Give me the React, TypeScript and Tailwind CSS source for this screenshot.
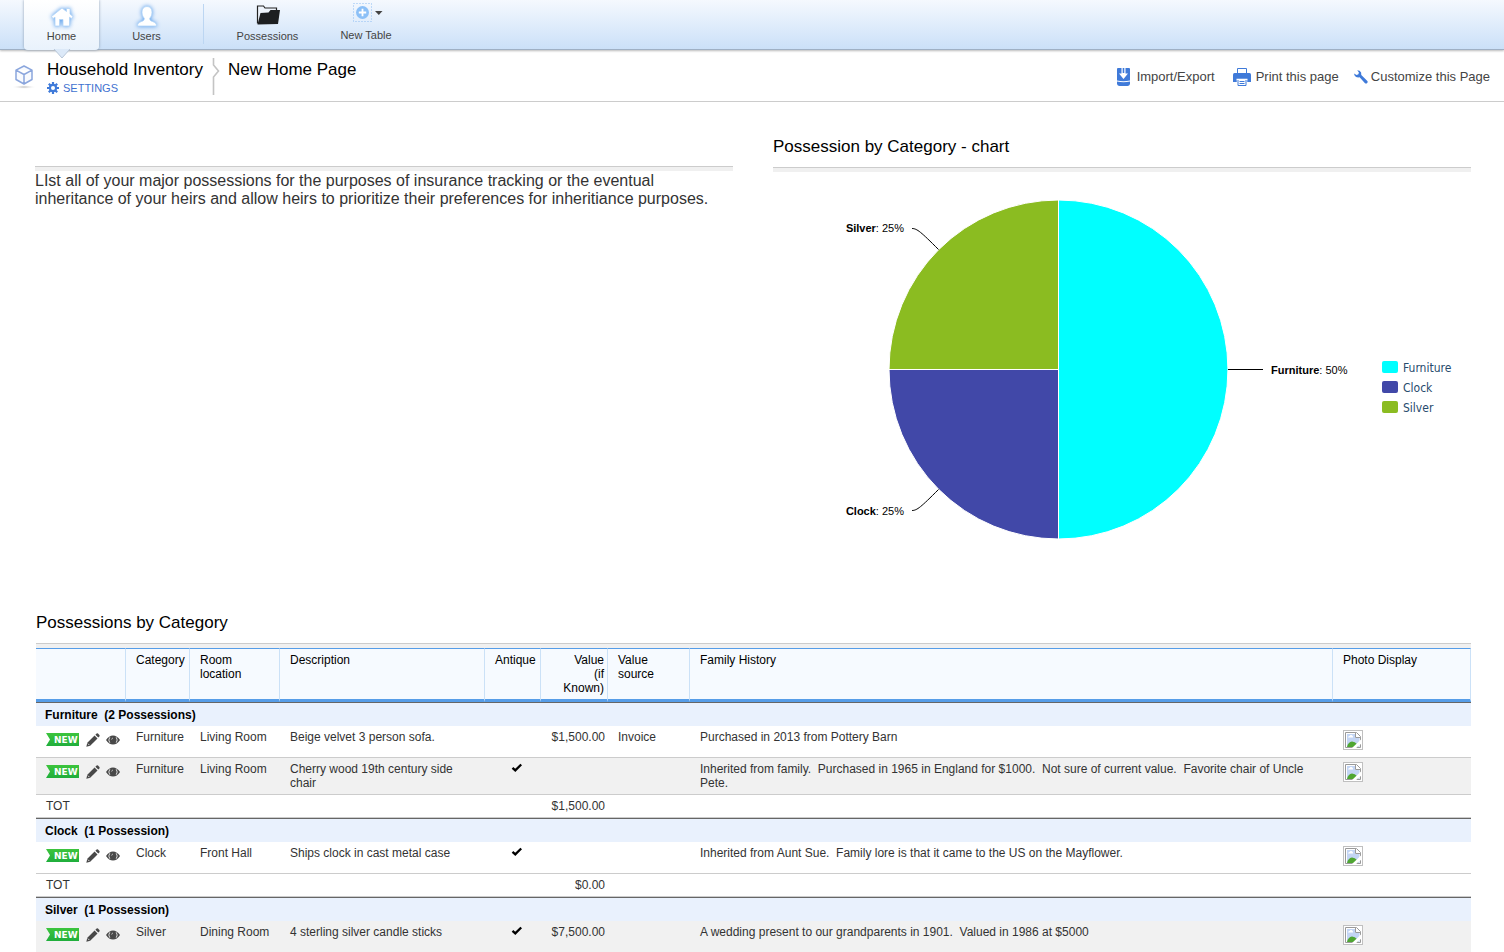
import React from "react";

interface Possession {
  category: string;
  room: string;
  description: string;
  antique?: boolean;
  value?: string;
  source?: string;
  history: string;
  shaded?: boolean;
}

interface Group {
  title: string;
  total?: string;
  rows: Possession[];
}

const groups: Group[] = [
  {
    title: "Furniture\u00a0 (2 Possessions)",
    total: "$1,500.00",
    rows: [
      {
        category: "Furniture",
        room: "Living Room",
        description: "Beige velvet 3 person sofa.",
        value: "$1,500.00",
        source: "Invoice",
        history: "Purchased in 2013 from Pottery Barn",
      },
      {
        category: "Furniture",
        room: "Living Room",
        description: "Cherry wood 19th century side chair",
        antique: true,
        history:
          "Inherited from family.\u00a0 Purchased in 1965 in England for $1000.\u00a0 Not sure of current value.\u00a0 Favorite chair of Uncle Pete.",
        shaded: true,
      },
    ],
  },
  {
    title: "Clock\u00a0 (1 Possession)",
    total: "$0.00",
    rows: [
      {
        category: "Clock",
        room: "Front Hall",
        description: "Ships clock in cast metal case",
        antique: true,
        history:
          "Inherited from Aunt Sue.\u00a0 Family lore is that it came to the US on the Mayflower.",
      },
    ],
  },
  {
    title: "Silver\u00a0 (1 Possession)",
    rows: [
      {
        category: "Silver",
        room: "Dining Room",
        description: "4 sterling silver candle sticks",
        antique: true,
        value: "$7,500.00",
        history:
          "A wedding present to our grandparents in 1901.\u00a0 Valued in 1986 at $5000",
        shaded: true,
      },
    ],
  },
];

function HomeIcon() {
  return (
    <svg width="26" height="24" viewBox="0 0 26 24" aria-hidden className="drop-shadow-[0_0_2px_#4f98ea]">
      <path
        d="M13 3 L2.500 11.500 L4 13.500 L6 12.200 V21 H10.500 V14.500 H14 V21 H20.500 V12.200 L22.500 13.500 L24 11.500 L21 9 V3.500 H17.500 V6.500 Z"
        fill="#fff"
        stroke="#b4d5f8"
        strokeWidth="0.8"
      />
    </svg>
  );
}

function UserIcon() {
  return (
    <svg width="26" height="24" viewBox="0 0 26 24" aria-hidden className="drop-shadow-[0_0_2px_#4f98ea]">
      <path
        d="M13 1.5 C9.7 1.5 8 3.8 8 7.2 C8 10 9 12 10.3 13.2 C10.3 15.2 9.6 15.8 7.5 16.5 C4.7 17.5 3.5 18.6 3.5 21 H22.5 C22.5 18.6 21.3 17.5 18.5 16.5 C16.4 15.8 15.7 15.2 15.7 13.2 C17 12 18 10 18 7.2 C18 3.8 16.3 1.5 13 1.5 Z"
        fill="#fff"
        stroke="#b4d5f8"
        strokeWidth="0.8"
      />
    </svg>
  );
}

function FolderIcon() {
  return (
    <svg width="24" height="20" viewBox="0 0 24 20" aria-hidden>
      <path d="M1.500 18.500 V1 H7.500 L9 3 H20.500 V5" fill="#eef4fc" stroke="#222" strokeWidth="1.2" />
      <path d="M1.500 19.500 L4.500 8 L12.500 7.500 L14.500 5 H24 L22 19 Z" fill="#1d1f21" />
    </svg>
  );
}

function NewTableIcon() {
  return (
    <svg width="30" height="19" viewBox="0 0 30 19" aria-hidden>
      <rect x="0.5" y="0.5" width="18" height="18" fill="none" stroke="#8dbdf2" strokeDasharray="1 2" />
      <circle cx="9.5" cy="9.5" r="6.5" fill="#8cc0f7" />
      <path d="M9.5 5.8 V13.2 M5.8 9.5 H13.2" stroke="#fff" strokeWidth="1.8" />
      <path d="M22 8 H29.5 L25.8 12 Z" fill="#444" />
    </svg>
  );
}

function CubeIcon() {
  return (
    <svg width="26" height="26" viewBox="0 0 26 26" aria-hidden>
      <defs>
        <radialGradient id="cube-shadow">
          <stop offset="0" stopColor="#bbb" />
          <stop offset="1" stopColor="#fff" stopOpacity="0" />
        </radialGradient>
      </defs>
      <ellipse cx="13" cy="23" rx="12.5" ry="2" fill="url(#cube-shadow)" />
      <path
        d="M13 2 L21 6.2 V15.5 L13 20 L5 15.5 V6.2 Z M5 6.2 L13 10.5 L21 6.2 M13 10.5 V20"
        fill="#f8fafe"
        stroke="#8ba6dd"
        strokeWidth="1.5"
        strokeLinejoin="round"
      />
    </svg>
  );
}

function GearIcon() {
  return (
    <svg width="12" height="12" viewBox="0 0 12 12" aria-hidden>
      <g stroke="#3f7ad9" strokeWidth="2.2">
        <path d="M6 0 V12 M0 6 H12 M1.8 1.8 L10.2 10.2 M10.2 1.8 L1.8 10.2" />
      </g>
      <circle cx="6" cy="6" r="4.2" fill="#3f7ad9" />
      <circle cx="6" cy="6" r="2" fill="#fff" />
    </svg>
  );
}

function ImportIcon() {
  return (
    <svg width="13" height="18" viewBox="0 0 13 18" aria-hidden>
      <path d="M0 1 Q0 0 1 0 H12 Q13 0 13 1 V12.500 Q6.500 14 0 12.500 Z" fill="#3f7ad9" />
      <path d="M4.500 0 H5.700 V5 H7.300 V0 H8.500 V5.500 H11 L6.500 11 L2 5.500 H4.500 Z" fill="#fff" />
      <path d="M0 13.500 Q6.500 15 13 13.500 V16 Q12.500 18 10.500 18 H2.500 Q0.500 18 0 16 Z" fill="#3f7ad9" />
    </svg>
  );
}

function PrintIcon() {
  return (
    <svg width="18" height="18" viewBox="0 0 18 18" aria-hidden>
      <path d="M4.5 6 V0.5 H13.5 V6" fill="#fff" stroke="#3f7ad9" />
      <path d="M1.5 5 H16.5 Q18 5 18 6.5 V14 H0 V6.5 Q0 5 1.5 5 Z" fill="#3f7ad9" />
      <path d="M3.5 11.5 H14.500 M4.500 11.500 H13.500 V17.500 H4.500 Z" fill="#fff" stroke="#fff" strokeWidth="1.5" />
      <path d="M5 12 V17.5 H13 V12" fill="none" stroke="#3f7ad9" />
      <path d="M6.500 13.500 H11.500 M6.500 15.500 H11.500" stroke="#3f7ad9" />
    </svg>
  );
}

function WrenchIcon() {
  return (
    <svg width="14" height="14" viewBox="0 0 14 14" aria-hidden>
      <path
        d="M3.2 0.3 L5.6 0.8 Q7.8 2 7.3 5 L13.6 11.2 Q14 12.4 13 13.2 Q12 14 11 13.2 L5.6 7.3 Q2 8 0.6 5.6 L0 3.6 L2.6 4.9 L4.4 4.2 L4.9 2.4 Z"
        fill="#3f7ad9"
      />
    </svg>
  );
}

function PencilIcon() {
  return (
    <svg width="14" height="14" viewBox="0 0 14 14" aria-hidden>
      <path d="M0.3 13.7 L1.3 9.8 L8.6 2.5 L11.5 5.4 L4.2 12.7 Z" fill="#484848" />
      <path d="M9.4 1.7 L10.6 0.6 Q11.3 0 12 0.6 L13.4 2 Q14 2.7 13.4 3.4 L12.3 4.6 Z" fill="#484848" />
      <path d="M1.9 10.6 L3.4 12.1" stroke="#fff" strokeWidth="0.8" />
    </svg>
  );
}

function EyeIcon() {
  return (
    <svg width="14" height="10" viewBox="0 0 14 10" aria-hidden>
      <path d="M0 5 Q3 0.5 7 0.5 Q11 0.5 14 5 Q11 9.5 7 9.5 Q3 9.5 0 5 Z" fill="#484848" />
      <path d="M3.8 2.3 Q1.8 5 3.8 7.7 M10.2 2.3 Q12.2 5 10.2 7.7" fill="none" stroke="#eee" strokeWidth="0.9" />
      <path d="M5.6 4.6 Q5.700 3.200 7 3" fill="none" stroke="#ccc" strokeWidth="0.8" />
    </svg>
  );
}

function CheckIcon() {
  return (
    <svg width="12" height="10" viewBox="0 0 12 10" role="img" aria-label="Yes">
      <path d="M1.5 4.8 L4.3 7.4 L10.2 1.5" fill="none" stroke="#000" strokeWidth="2.3" />
    </svg>
  );
}

function PhotoIcon() {
  return (
    <svg width="20" height="20" viewBox="0 0 20 20" role="img" aria-label="Photo" className="block">
      <rect x="0.5" y="0.5" width="19" height="19" fill="#fff" stroke="#c0c0c0" />
      <path d="M2.5 2.5 H13.5 L17.5 6.5 V17.5 H2.5 Z" fill="#fff" stroke="#9a9a9a" />
      <path d="M4 4 H12 V8 H16.5 V17 H4 Z" fill="#c3d5f4" />
      <path d="M5 7.500 Q5 6 6.5 6 Q7 4.500 8.500 5 Q10.5 5.500 10 7.500 Z" fill="#fff" />
      <path d="M4 17 Q5 12 9 11.500 Q12 11.500 14 14 L15 17 Z" fill="#4fa632" />
      <path d="M18.500 9 L8.500 18.500 H12.500 L18.500 13.500 Z" fill="#fff" />
      <path d="M12.5 2.5 V7.5 H17.5" fill="#fff" stroke="#9a9a9a" />
    </svg>
  );
}

function TopNav() {
  return (
    <nav className="flex h-[50px] border-b border-[#9fb0c4] bg-linear-to-b from-[#f5f9fe] to-[#cbe0f8] pl-6 text-[11px] leading-[14px] text-[#444] shadow-[0_1px_2px_#bbb]">
      <a
        href="#home"
        className="relative flex h-[50px] w-[75px] flex-col items-center rounded-b bg-linear-to-b from-white to-[#e9f2fc] pt-[5px] shadow-[0_0_3px_#8a9bb0]"
      >
        <HomeIcon />
        Home
        <svg width="18" height="10" viewBox="0 0 18 10" aria-hidden className="absolute top-[49px] left-[29px]">
          <path d="M1 0 L9 9 L17 0" fill="#dce9f8" stroke="#b9c7d8" />
        </svg>
      </a>
      <a href="#users" className="ml-[10px] flex w-[75px] flex-col items-center pt-[5px]">
        <UserIcon />
        Users
      </a>
      <div className="mt-1 ml-[19px] h-10 w-px bg-[#bcd6f2]" />
      <a href="#possessions" className="ml-[26px] flex w-[75px] flex-col items-center pt-[5px]">
        <span className="flex h-6">
          <FolderIcon />
        </span>
        Possessions
      </a>
      <button type="button" className="ml-[22px] flex w-[78px] flex-col items-center pt-[3px]">
        <span className="flex h-[25px] pl-1">
          <NewTableIcon />
        </span>
        New Table
      </button>
    </nav>
  );
}

function PageBar() {
  return (
    <header className="flex h-[52px] items-start justify-between border-b border-[#ccc] pr-[14px] pl-[11px]">
      <div className="flex items-start">
        <span className="mt-[14px] mr-[10px]">
          <CubeIcon />
        </span>
        <div className="pt-[10px]">
          <h1 className="text-[17px] leading-5 text-black">Household Inventory</h1>
          <a href="#settings" className="flex items-center gap-1 text-[11px] leading-4 text-[#3f72d0]">
            <GearIcon />
            SETTINGS
          </a>
        </div>
        <svg width="8" height="37" viewBox="0 0 8 37" aria-hidden className="mt-2 ml-[9px]">
          <path d="M1.5 0 V7 L6.5 13 L1.5 19 V37" fill="none" stroke="#c4c4c4" strokeWidth="1.6" />
        </svg>
        <h2 className="pt-[10px] pl-2 text-[17px] leading-5 text-black">New Home Page</h2>
      </div>
      <div className="flex h-[54px] items-center text-[13px] text-[#444]">
        <a href="#import" className="flex items-center gap-[7px]">
          <ImportIcon />
          Import/Export
        </a>
        <a href="#print" className="ml-[18px] flex items-center gap-[5px]">
          <PrintIcon />
          Print this page
        </a>
        <a href="#customize" className="ml-[15px] flex items-center gap-[3px]">
          <WrenchIcon />
          Customize this Page
        </a>
      </div>
    </header>
  );
}

function PieChart() {
  return (
    <svg
      viewBox="0 0 698 400"
      role="img"
      aria-label="Possession by Category"
      className="w-full font-['Liberation_Sans',Arial,sans-serif]"
    >
      <g stroke="#fff" strokeWidth="1">
        <path d="M285.5 197.5 V28 A169.5 169.5 0 0 1 285.5 367 Z" fill="#00ffff" />
        <path d="M285.5 197.5 V367 A169.5 169.5 0 0 1 116 197.5 Z" fill="#4148a8" />
        <path d="M285.5 197.5 H116 A169.5 169.5 0 0 1 285.5 28 Z" fill="#8bbc21" />
      </g>
      <g fill="none" stroke="#000" strokeWidth="1">
        <path d="M455 197.5 H490" />
        <path d="M139 56.5 C144 56.5 148 60 165.5 77.5" />
        <path d="M139 338.5 C144 338.5 148 335 165.5 317.5" />
      </g>
      <g fontSize="11" fill="#000">
        <text x="498" y="202">
          <tspan fontWeight="bold">Furniture</tspan>: 50%
        </text>
        <text x="131" y="60" textAnchor="end">
          <tspan fontWeight="bold">Silver</tspan>: 25%
        </text>
        <text x="131" y="343" textAnchor="end">
          <tspan fontWeight="bold">Clock</tspan>: 25%
        </text>
      </g>
      <g fontSize="12" fill="#274b6d" className="font-['DejaVu_Sans_Condensed','Noto_Sans',sans-serif]">
        <rect x="609" y="189" width="16" height="12" rx="2" fill="#00ffff" />
        <text x="630" y="200">Furniture</text>
        <rect x="609" y="209" width="16" height="12" rx="2" fill="#4148a8" />
        <text x="630" y="220">Clock</text>
        <rect x="609" y="229" width="16" height="12" rx="2" fill="#8bbc21" />
        <text x="630" y="240">Silver</text>
      </g>
    </svg>
  );
}

function NewBadge() {
  return (
    <span className="h-[13px] w-[33px] bg-linear-to-b from-[#3cc43c] to-[#1fae3c] pl-2 font-['DejaVu_Sans',sans-serif] text-[9px] leading-[14px] font-bold text-white [clip-path:polygon(0_0,100%_0,100%_100%,0_100%,4px_50%)]">
      NEW
    </span>
  );
}

const headCell =
  "border-t border-r border-b-[3px] border-t-[#569de8] border-r-[#cbe1f7] border-b-[#569de8] bg-[#f6faff] py-1 pr-[3px] pl-[10px] font-normal";
const cell = "border-b border-[#ccc] py-1 pr-[3px] pl-[10px]";

function PossessionRow({ row }: { row: Possession }) {
  return (
    <tr className={row.shaded ? "h-8 bg-[#f1f1f1]" : "h-8"}>
      <td className={cell}>
        <div className="flex h-[19px] items-center">
          <NewBadge />
          <button type="button" aria-label="Edit" className="ml-[7px]">
            <PencilIcon />
          </button>
          <button type="button" aria-label="View" className="ml-[6px]">
            <EyeIcon />
          </button>
        </div>
      </td>
      <td className={cell}>{row.category}</td>
      <td className={cell}>{row.room}</td>
      <td className={cell}>{row.description}</td>
      <td className={cell}>
        {row.antique && (
          <span className="flex justify-center pt-px">
            <CheckIcon />
          </span>
        )}
      </td>
      <td className={`${cell} text-right`}>{row.value}</td>
      <td className={cell}>{row.source}</td>
      <td className={cell}>{row.history}</td>
      <td className={cell}>
        <PhotoIcon />
      </td>
    </tr>
  );
}

function PossessionsTable() {
  return (
    <table className="w-full table-fixed border-separate border-spacing-0 text-left text-xs leading-[14px] text-[#333] [&_td]:align-top [&_th]:align-top">
      <colgroup>
        <col className="w-[90px]" />
        <col className="w-[64px]" />
        <col className="w-[90px]" />
        <col className="w-[205px]" />
        <col className="w-[56px]" />
        <col className="w-[67px]" />
        <col className="w-[82px]" />
        <col />
        <col className="w-[138px]" />
      </colgroup>
      <thead className="text-black">
        <tr>
          <th className={headCell} />
          <th className={headCell}>Category</th>
          <th className={headCell}>Room location</th>
          <th className={headCell}>Description</th>
          <th className={headCell}>Antique</th>
          <th className={`${headCell} text-right`}>
            Value
            <br />
            (if
            <br />
            Known)
          </th>
          <th className={headCell}>
            Value
            <br />
            source
          </th>
          <th className={headCell}>Family History</th>
          <th className={headCell}>Photo Display</th>
        </tr>
      </thead>
      {groups.map((group) => (
        <tbody key={group.title}>
          <tr>
            <th
              colSpan={9}
              className="border-t border-[#666] bg-[#e9f1fd] pt-[5px] pr-1 pb-1 pl-[9px] font-bold text-black"
            >
              {group.title}
            </th>
          </tr>
          {group.rows.map((row) => (
            <PossessionRow key={row.description} row={row} />
          ))}
          {group.total && (
            <tr>
              <td colSpan={5} className={cell}>
                TOT
              </td>
              <td className={`${cell} text-right`}>{group.total}</td>
              <td colSpan={3} className={cell} />
            </tr>
          )}
        </tbody>
      ))}
    </table>
  );
}

export default function App() {
  return (
    <div className="min-h-screen bg-white font-['Liberation_Sans',Arial,sans-serif]">
      <TopNav />
      <PageBar />
      <main className="pr-[33px] pl-[35px]">
        <div className="grid grid-cols-2 gap-10">
          <section className="pt-16">
            <div className="h-[5px] border-t border-[#ccc] bg-[#f0f0f0]" />
            <p className="pt-px text-base leading-[18px] text-[#333]">
              LIst all of your major possessions for the purposes of insurance tracking or the eventual inheritance of
              your heirs and allow heirs to prioritize their preferences for inheritiance purposes.
            </p>
          </section>
          <section className="pt-[35px]">
            <h3 className="pb-[10px] text-[17px] leading-5 text-black">Possession by Category - chart</h3>
            <div className="h-[5px] border-t border-[#ccc] bg-[#f0f0f0]" />
            <PieChart />
          </section>
        </div>
        <section className="pt-[41px] pl-px">
          <h3 className="pb-[10px] text-[17px] leading-5 text-black">Possessions by Category</h3>
          <div className="h-[5px] border-t border-[#ccc] bg-[#f0f0f0]" />
          <PossessionsTable />
        </section>
      </main>
    </div>
  );
}
